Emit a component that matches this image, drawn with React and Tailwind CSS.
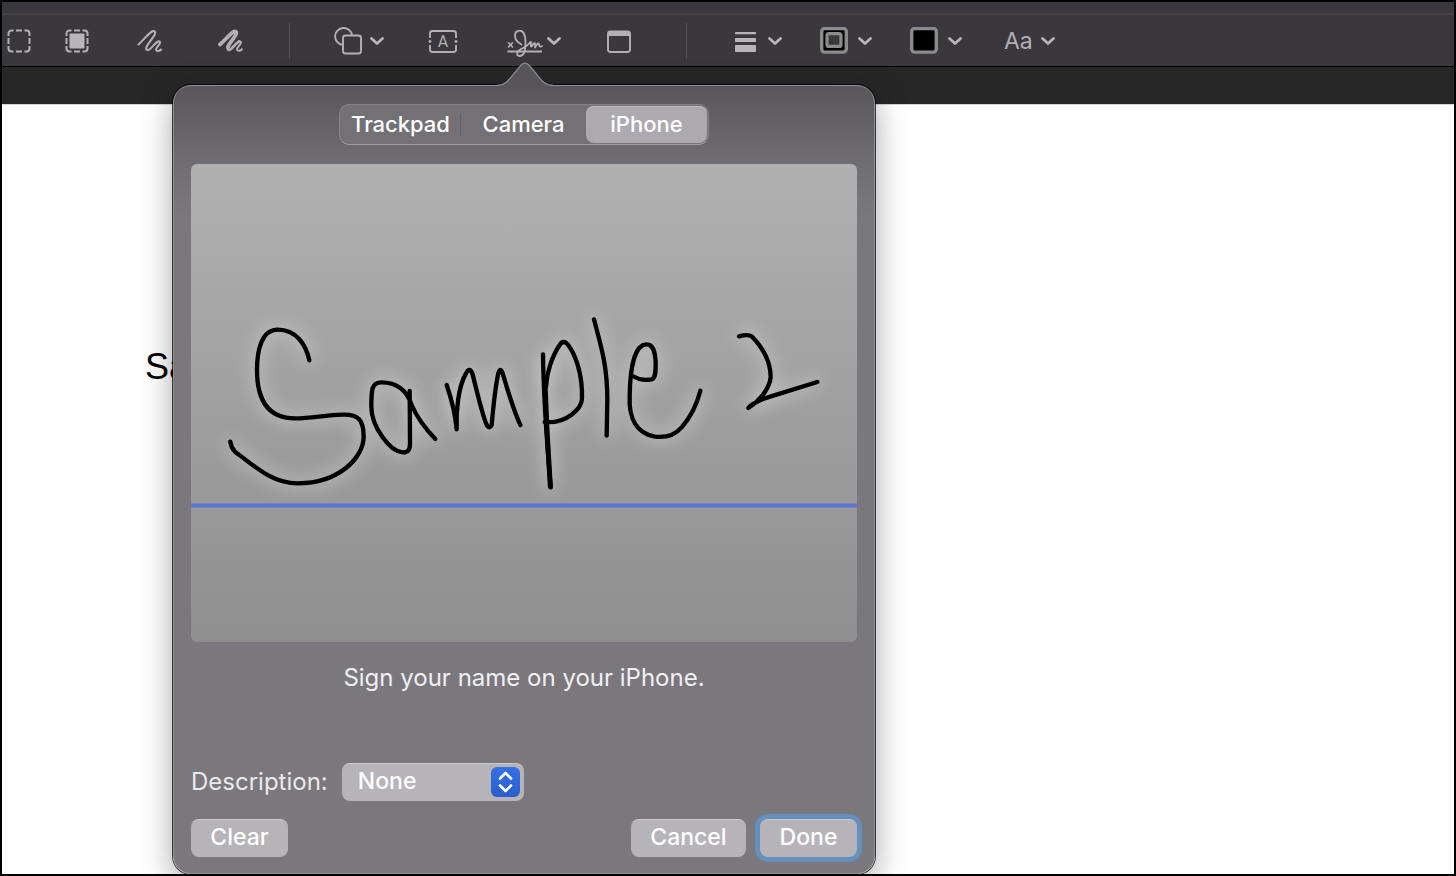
import React, { useState } from 'react';

const TABS = [
  { name: 'Trackpad', width: 'w-[119px]' },
  { name: 'Camera', width: 'flex-1' },
  { name: 'iPhone', width: 'w-[121px]' },
];

function Chevron() {
  return (
    <svg width="14" height="9" viewBox="0 0 14 9" fill="none" aria-hidden="true">
      <path d="M1.5 1.5 7 6.6l5.5-5.1" stroke="#b9b6bb" strokeWidth="2.7" strokeLinecap="round" strokeLinejoin="round" />
    </svg>
  );
}

function Separator({ className }) {
  return <span className={`h-9 w-px bg-[#545257] ${className}`} />;
}

function DashedBox() {
  return (
    <path
      d="M1.5 7V4.5a3 3 0 0 1 3-3H6.5M9 1.5h6M17.5 1.5h2a3 3 0 0 1 3 3V7M22.500 9v6M22.500 17v2.500a3 3 0 0 1-3 3H17.500M15 22.500H9M6.500 22.500h-2a3 3 0 0 1-3-3V17M1.500 15V9"
      stroke="#b3b0b5"
      strokeWidth="2"
    />
  );
}

function SelectionIcon() {
  return (
    <svg width="24" height="24" viewBox="0 0 24 24" fill="none">
      <DashedBox />
    </svg>
  );
}

function AlphaIcon() {
  return (
    <svg width="24" height="24" viewBox="0 0 24 24" fill="none">
      <DashedBox />
      <rect x="4.500" y="4.500" width="15" height="15" rx="1" fill="#b9b6bb" />
    </svg>
  );
}

function SketchIcon() {
  return (
    <svg width="26" height="24" viewBox="0 0 26 24" fill="none" stroke="#b3b0b5" strokeLinecap="round" strokeLinejoin="round">
      <path
        d="M1.500 15.500C6 11.500 11 5 15 2.500c2-1 4 0 3 2.500-2 4.500-7 9-8.500 13-1 3 1 4 3.500 2 3-2.500 5-6 8-7.500 2-.7 2.500 1 1.500 2.500-1.500 2.500-4 4.500-3.500 6 .5 1.500 3.500 1.500 5-.5"
        strokeWidth="2.100"
      />
    </svg>
  );
}

function DrawIcon() {
  return (
    <svg width="26" height="24" viewBox="0 0 26 24" fill="none" stroke="#b3b0b5" strokeLinecap="round" strokeLinejoin="round">
      <path d="M2 15.500C7 11 12 5 15.500 2.800c2-1 3.500 0 2.500 2.500-2 4.500-7 8.700-8 12.700" strokeWidth="3.800" />
      <path d="M10 17c-1 4 1 4.500 3 3 3-2.500 5-6 8-7.500" strokeWidth="2.800" />
      <path d="M20 13c3-1.500 3.500 0 2.500 1.700-1.500 2.500-4 4.500-3.500 6 .5 1.500 3.500 1.500 5-.5" strokeWidth="2" />
    </svg>
  );
}

function ShapesIcon() {
  return (
    <svg width="28" height="28" viewBox="0 0 28 28" fill="none" stroke="#b3b0b5" strokeWidth="1.900">
      <path d="M8.500 17.900A8.500 8.500 0 1 1 18 8" />
      <rect x="9" y="8.500" width="18" height="18" rx="2.500" />
    </svg>
  );
}

function TextIcon() {
  return (
    <svg width="30" height="24" viewBox="0 0 30 24" fill="none">
      <path
        d="M2 9V4.500A2.500 2.500 0 0 1 4.500 2h21A2.500 2.500 0 0 1 28 4.500V9M28 16v4.500a2.500 2.500 0 0 1-2.500 2.500h-21A2.500 2.500 0 0 1 2 20.500V16"
        stroke="#b3b0b5"
        strokeWidth="1.900"
      />
      <circle cx="2" cy="12.500" r="1.400" fill="#b3b0b5" />
      <circle cx="28" cy="12.500" r="1.400" fill="#b3b0b5" />
      <text x="15" y="18" textAnchor="middle" fontFamily="Roboto, sans-serif" fontSize="16" fill="#b3b0b5">A</text>
    </svg>
  );
}

function SignIcon() {
  return (
    <svg width="36" height="34" viewBox="0 0 36 34" fill="none" stroke="#b3b0b5" strokeWidth="1.800" strokeLinecap="round" strokeLinejoin="round">
      <path d="M1.500 18.800 5.500 23M5.500 18.800 1.500 23" strokeWidth="1.600" />
      <path d="M.5 27.500h34.500" strokeLinecap="butt" />
      <path d="M14.500 20.500C10.500 18.500 8 15.500 8 11.800 8 8.500 10 6.700 12.500 6.700c4 0 6 4.800 6 12.300 0 7.500-1.500 13-5.800 13-3.200 0-3.200-3-.7-5.500 3.500-3 8-3.500 10.500-7.500 1-1.800 2-1.300 1.500.8-.6 3 .3 3.700 1.500 1.500 2-3.300 3-3.300 2.500 2.200 1.500-3 3-4.800 3.800-3.800.7 1-.3 4.300 3.200 2.300" />
    </svg>
  );
}

function WindowIcon() {
  return (
    <svg width="26" height="24" viewBox="0 0 26 24" fill="none">
      <rect x="2" y="2.500" width="22" height="20.500" rx="2.500" stroke="#b3b0b5" strokeWidth="1.900" />
      <path d="M1.500 7V4.500A2.500 2.500 0 0 1 4 2h18A2.500 2.500 0 0 1 24.500 4.500V7z" fill="#b3b0b5" />
    </svg>
  );
}

function LinesIcon() {
  return (
    <svg width="21" height="22" viewBox="0 0 21 22" fill="#b9b6bb">
      <rect y="2" width="21" height="2.200" rx=".5" />
      <rect y="8" width="21" height="4" rx=".5" />
      <rect y="15" width="21" height="7" rx=".8" />
    </svg>
  );
}

function BorderColorIcon() {
  return (
    <svg width="28" height="28" viewBox="0 0 28 28" fill="none">
      <rect x="1.700" y="1.500" width="24.600" height="23.600" rx="3" fill="#000" stroke="#8b8b8b" strokeWidth="3.400" />
      <rect x="7" y="6.700" width="14" height="12.700" rx="2" fill="#3a383d" stroke="#8b8b8b" strokeWidth="3.200" />
    </svg>
  );
}

function FillColorIcon() {
  return (
    <svg width="28" height="28" viewBox="0 0 28 28" fill="none">
      <rect x="1.700" y="1.500" width="24.600" height="23.600" rx="3" fill="#000" stroke="#8b8b8b" strokeWidth="3.400" />
    </svg>
  );
}

function Tool({ label, className = '', gap = 'gap-2', menu, children }) {
  return (
    <button type="button" aria-label={label} className={`flex h-9 items-center ${gap} ${className}`}>
      {children}
      {menu && <Chevron />}
    </button>
  );
}

function Signature() {
  return (
    <svg
      className="block h-auto w-full"
      viewBox="191 164 666 478"
      fill="none"
      stroke="#000"
      strokeWidth="13"
      strokeLinecap="round"
      strokeLinejoin="round"
      role="img"
      aria-label="Signature"
    >
      <g className="drop-shadow-[0_0_9px_rgba(255,255,255,0.75)]">
        <g transform="translate(200 290) scale(0.33333)">
          <path d="M328 211C318 165 290 119 233 119C185 119 171 180 171 240C171 310 190 385 285 385C340 385 370 375 430 374C475 373 491 390 491 440C491 500 420 580 293 580C220 580 170 535 105 485Q93 472 91 455" />
          <path d="M629 303L630 460C630 480 625 487 608 487C570 485 514 410 514 350C514 300 514 277 545 277C590 277 620 300 635 345C650 380 675 415 706 447" />
          <path d="M740 285C752 320 765 360 770 418C768 360 775 290 798 250Q809 230 817 250C830 300 850 390 862 408Q870 417 875 405C880 350 888 280 895 250Q901 230 908 250C920 290 940 360 961 405" />
        </g>
        <g transform="translate(520 290) scale(0.33333)">
          <path d="M69 193C70 270 80 450 92 592" />
          <path d="M75 280L81 420L91 590" strokeWidth="15" />
          <path d="M74 396C140 402 186 355 186 325C188 250 165 190 143 163Q130 148 119 165C95 200 80 250 78 290" />
          <path d="M222 88C240 160 262 220 262 330L260 437" />
          <path d="M338 258C355 268 375 272 395 268C408 265 407 240 407 215C405 185 400 163 380 163C345 163 330 230 329 320C326 385 350 430 405 440C440 444 465 435 485 412C510 383 530 345 541 302" />
          <path d="M657 139Q685 132 695 139C730 175 752 215 752 262C748 300 715 335 685 354C690 345 720 328 760 317L892 276" />
        </g>
      </g>
      <path d="M191 505.500H857" stroke="#5b74d1" strokeWidth="4" strokeLinecap="butt" />
    </svg>
  );
}

function PushButton({ className = '', children }) {
  return (
    <button
      type="button"
      className={`h-[38px] rounded-lg border-t border-[#cbc9cd] bg-[#b6b4b9] pb-0.5 text-[23px] font-medium text-white ${className}`}
    >
      {children}
    </button>
  );
}

function SignaturePopover() {
  const [tab, setTab] = useState('iPhone');
  const [description, setDescription] = useState('None');

  return (
    <div
      role="dialog"
      aria-label="Create signature"
      className="absolute -left-[334px] top-[62px] z-10 w-[702px] rounded-[18px] border border-[#929095] bg-[linear-gradient(#59565b_0px,#6e6c71_70px,#7a787d_130px)] px-[17px] pb-4 pt-[18px] shadow-[0_0_0_1px_rgba(0,0,0,0.75),0_10px_32px_rgba(0,0,0,0.36)]"
    >
      <svg className="absolute -top-6 left-[323px]" width="56" height="26" viewBox="0 0 56 26" fill="none" aria-hidden="true">
        <path d="M0 23.500C8 23 11 19 15 14L24 3Q28-1 32 3L41 14C45 19 48 23 56 23.500V26H0Z" fill="#58555a" />
        <path d="M0 22.500C8 22 11 18 15 13L24 2Q28-2 32 2L41 13C45 18 48 22 56 22.500" stroke="#151515" />
        <path d="M0 23.500C8 23 11 19 15 14L24 3Q28-1 32 3L41 14C45 19 48 23 56 23.500" stroke="#88868b" strokeWidth="1.400" />
      </svg>

      <div className="mx-auto flex w-[370px] items-center rounded-[10px] border border-[#858388] border-b-[#a09ea3] bg-[#737176] p-px">
        {TABS.map(({ name, width }, i) => (
          <React.Fragment key={name}>
            {i === 1 && <span className="h-[22px] w-px bg-[#646267]" />}
            <button
              type="button"
              aria-pressed={tab === name}
              onClick={() => setTab(name)}
              className={`h-[37px] rounded-lg text-[22px] font-medium text-white ${width} ${
                tab === name ? 'bg-[#acaaaf] shadow-[inset_0_1px_0_#bdbbc0]' : ''
              }`}
            >
              {name}
            </button>
          </React.Fragment>
        ))}
      </div>

      <div className="mt-[19px] overflow-hidden rounded-md bg-linear-to-b from-[#b1b1b1] to-[#8f8f90]">
        <Signature />
      </div>

      <p className="mt-[19px] text-center text-2xl leading-[34px] text-[#f0eff1]">Sign your name on your iPhone.</p>

      <div className="mt-[68px] flex items-center gap-3.5">
        <label htmlFor="description" className="text-2xl text-[#eae9eb]">Description:</label>
        <div className="relative">
          <select
            id="description"
            value={description}
            onChange={(e) => setDescription(e.target.value)}
            className="block h-[38px] w-[182px] appearance-none rounded-lg border-t border-[#cbc9cd] bg-[#b6b4b9] pb-0.5 pl-4 text-[23px] font-medium text-white"
          >
            <option>None</option>
          </select>
          <span className="pointer-events-none absolute right-1 top-1 flex h-[30px] w-[29px] items-center justify-center rounded-md bg-linear-to-b from-[#3570e6] to-[#2a5fcb]">
            <svg width="15" height="22" viewBox="0 0 15 22" fill="none" stroke="#fff" strokeWidth="2.600" strokeLinecap="round" strokeLinejoin="round">
              <path d="M2 7.500 7.500 2 13 7.500M2 14.500 7.500 20 13 14.500" />
            </svg>
          </span>
        </div>
      </div>

      <div className="mt-[18px] flex items-center">
        <PushButton className="w-[97px]">Clear</PushButton>
        <PushButton className="ml-auto w-[115px]">Cancel</PushButton>
        <PushButton className="ml-3.5 w-[97px] border-[#8fb8e6] ring-5 ring-[#6590bd]">Done</PushButton>
      </div>
    </div>
  );
}

export default function App() {
  return (
    <div className="flex min-h-screen flex-col overflow-hidden border-2 border-black bg-white font-[Inter,'Liberation_Sans',sans-serif]">
      <div className="h-[11px] bg-[#3a383d]" />

      {/* Markup toolbar */}
      <header className="flex items-center border-b border-t-2 border-b-black border-t-[#444247] bg-[#3a383d] pb-[7px] pl-[5px] pt-2">
        <Tool label="Rectangular selection"><SelectionIcon /></Tool>
        <Tool label="Instant alpha" className="ml-[34px]"><AlphaIcon /></Tool>
        <Tool label="Sketch" className="ml-12"><SketchIcon /></Tool>
        <Tool label="Draw" className="ml-[55px]"><DrawIcon /></Tool>
        <Separator className="ml-[45px]" />
        <Tool label="Shapes" className="ml-11" menu><ShapesIcon /></Tool>
        <Tool label="Text" className="ml-11"><TextIcon /></Tool>
        <div className="relative ml-[49px]">
          <Tool label="Sign" gap="gap-1" menu><SignIcon /></Tool>
          <SignaturePopover />
        </div>
        <Tool label="Note" className="ml-[45px]"><WindowIcon /></Tool>
        <Separator className="ml-[54px]" />
        <Tool label="Shape style" className="ml-12" gap="gap-3" menu><LinesIcon /></Tool>
        <Tool label="Border color" className="ml-[38px]" gap="gap-2.5" menu><BorderColorIcon /></Tool>
        <Tool label="Fill color" className="ml-[38px]" gap="gap-2.5" menu><FillColorIcon /></Tool>
        <Tool label="Text style" className="ml-[42px]" menu>
          <span className="text-[23px] text-[#b3b0b5]">Aa</span>
        </Tool>
      </header>
      <div className="h-[37px] bg-[#272727]" />

      <main className="flex-1 border-t border-[#d5d3d6] bg-white px-[143px] pt-[242px]">
        <p className="font-['Liberation_Sans',sans-serif] text-4xl text-black">Sa</p>
      </main>
    </div>
  );
}
